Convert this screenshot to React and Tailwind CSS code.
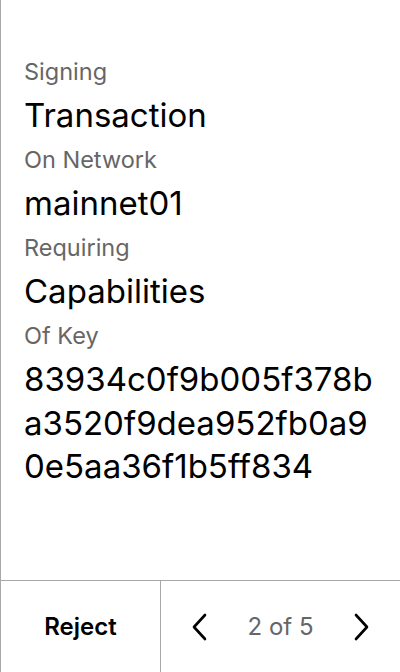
const rows = [
    { label: 'Signing', value: 'Transaction' },
    { label: 'On Network', value: 'mainnet01' },
    { label: 'Requiring', value: 'Capabilities' },
    { label: 'Of Key', value: '83934c0f9b005f378ba3520f9dea952fb0a90e5aa36f1b5ff834' },
];

const Chevron = ({ dir }) => (
    <svg width="16" height="28" viewBox="0 0 16 28" fill="none" stroke="currentColor" strokeWidth="2.6" strokeLinecap="round" strokeLinejoin="round">
        {dir === 'left' ? <polyline points="13,2 2,14 13,26" /> : <polyline points="3,2 14,14 3,26" />}
    </svg>
);

export default function App() {
    return (
        <div className="h-[672px] w-[400px] flex flex-col bg-white border-l border-[#a8a8a8] text-black font-['Inter',sans-serif]">
            <div className="flex-1 pl-[23px] pr-6 pt-[49.5px]">
                {rows.map((row) => (
                    <div key={row.label}>
                        <div className="text-[23.5px] leading-[44.5px] text-[#666]">{row.label}</div>
                        <div className="text-[33px] leading-[43.5px] break-all">{row.value}</div>
                    </div>
                ))}
            </div>
            <div className="h-[92px] flex border-t border-[#a8a8a8]">
                <button className="w-[160px] border-r border-[#a8a8a8] text-[24px] font-semibold">Reject</button>
                <div className="flex-1 flex items-center justify-between pl-[31px] pr-[31px]">
                    <Chevron dir="left" />
                    <span className="text-[24px] text-[#666]">2 of 5</span>
                    <Chevron dir="right" />
                </div>
            </div>
        </div>
    );
}
